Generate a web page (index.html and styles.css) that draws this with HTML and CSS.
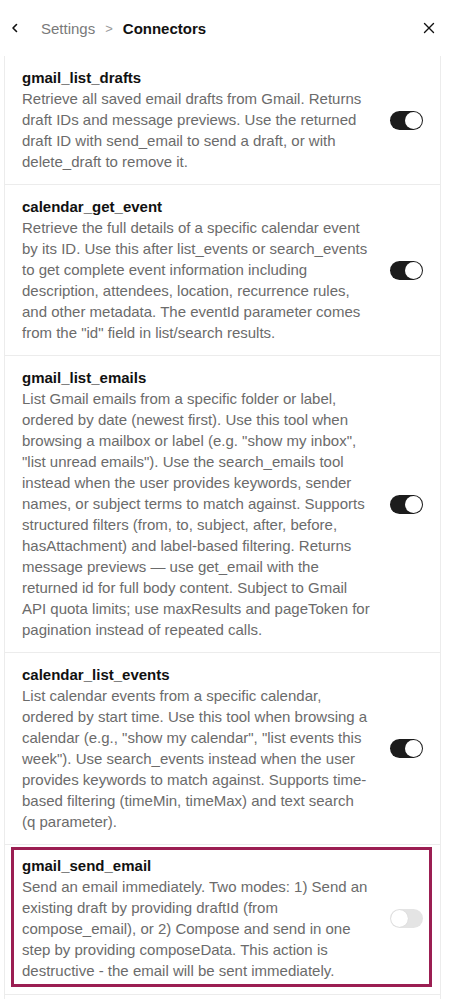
FILE: index.html
```html
<!DOCTYPE html>
<html lang="en">
<head>
  <meta charset="UTF-8" />
  <title>Connectors</title>
  <link rel="stylesheet" href="styles.css">
</head>
<body>
  <header class="topbar">
    <button class="icon-btn back" aria-label="Back">
      <svg width="12" height="12" viewBox="0 0 12 12"><path d="M7.5 2.5 L4 6 L7.5 9.5" fill="none" stroke="#111" stroke-width="1.6" stroke-linecap="round" stroke-linejoin="round"/></svg>
    </button>
    <nav class="crumbs">
      <span class="crumb">Settings</span>
      <span class="sep">&gt;</span>
      <span class="crumb current">Connectors</span>
    </nav>
    <button class="icon-btn close" aria-label="Close">
      <svg width="12" height="12" viewBox="0 0 12 12"><path d="M1.5 1.5 L10.5 10.5 M10.5 1.5 L1.5 10.5" fill="none" stroke="#111" stroke-width="1.4" stroke-linecap="round"/></svg>
    </button>
  </header>

  <div class="panel">
    <div class="row">
      <div class="info">
        <div class="name">gmail_list_drafts</div>
        <div class="desc">Retrieve all saved email drafts from Gmail. Returns draft IDs and message previews. Use the returned draft ID with send_email to send a draft, or with delete_draft to remove it.</div>
      </div>
      <span class="toggle on"></span>
    </div>

    <div class="row">
      <div class="info">
        <div class="name">calendar_get_event</div>
        <div class="desc">Retrieve the full details of a specific calendar event by its ID. Use this after list_events or search_events to get complete event information including description, attendees, location, recurrence rules, and other metadata. The eventId parameter comes from the "id" field in list/search results.</div>
      </div>
      <span class="toggle on"></span>
    </div>

    <div class="row">
      <div class="info">
        <div class="name">gmail_list_emails</div>
        <div class="desc">List Gmail emails from a specific folder or label, ordered by date (newest first). Use this tool when browsing a mailbox or label (e.g. "show my inbox", "list unread emails"). Use the search_emails tool instead when the user provides keywords, sender names, or subject terms to match against. Supports structured filters (from, to, subject, after, before, hasAttachment) and label-based filtering. Returns message previews — use get_email with the returned id for full body content. Subject to Gmail API quota limits; use maxResults and pageToken for pagination instead of repeated calls.</div>
      </div>
      <span class="toggle on"></span>
    </div>

    <div class="row">
      <div class="info">
        <div class="name">calendar_list_events</div>
        <div class="desc">List calendar events from a specific calendar, ordered by start time. Use this tool when browsing a calendar (e.g., "show my calendar", "list events this week"). Use search_events instead when the user provides keywords to match against. Supports time-based filtering (timeMin, timeMax) and text search <span class="nw">(q parameter).</span></div>
      </div>
      <span class="toggle on"></span>
    </div>

    <div class="row selected">
      <div class="focus">
        <div class="info">
          <div class="name">gmail_send_email</div>
          <div class="desc">Send an email immediately. Two modes: 1) Send an existing draft by providing draftId (from compose_email), or 2) Compose and send in one step by providing composeData. This action is destructive - the email will be sent immediately.</div>
        </div>
        <span class="toggle"></span>
      </div>
    </div>

    <div class="row tail"></div>
  </div>
</body>
</html>
```

FILE: styles.css
```css
* { box-sizing: border-box; }
body {
  margin: 0;
  background: #fff;
  font-family: "Liberation Sans", Arial, sans-serif;
  color: #111;
  overflow: hidden;
}
.topbar {
  height: 56px;
  display: flex;
  align-items: center;
  padding: 0 27px 0 8px;
}
.icon-btn {
  background: none;
  border: none;
  padding: 0;
  width: 14px;
  height: 14px;
  display: flex;
  align-items: center;
  justify-content: center;
  cursor: pointer;
}
.crumbs {
  flex: 1;
  display: flex;
  align-items: center;
  gap: 10px;
  margin-left: 19px;
  font-size: 15px;
}
.crumb { color: #7a7a7a; }
.sep { color: #999; font-size: 13px; }
.crumb.current { color: #111; font-weight: bold; }

.panel {
  margin-left: 4px;
  width: 437px;
  border-left: 1px solid #ececec;
  border-right: 1px solid #ececec;
}
.row {
  display: flex;
  align-items: center;
  gap: 10px;
  padding: 12px 17px;
  border-bottom: 1px solid #ececec;
}
.info {
  width: 352px;
  flex-shrink: 0;
}
.name {
  font-size: 15px;
  font-weight: bold;
  line-height: 20px;
  color: #111;
}
.desc {
  font-size: 15px;
  line-height: 21px;
  color: #6b6b6b;
}
.nw { white-space: nowrap; }
.toggle {
  position: relative;
  width: 33px;
  height: 19px;
  border-radius: 10px;
  background: #e4e4e4;
  margin-left: 6px;
}
.toggle::after {
  content: "";
  position: absolute;
  top: 1px;
  left: 1px;
  width: 17px;
  height: 17px;
  border-radius: 50%;
  background: #fff;
  box-shadow: 0 0 1px rgba(0,0,0,0.15);
}
.toggle.on { background: #1c1c1c; }
.toggle.on::after {
  left: 15px;
  box-shadow: none;
}
.row.selected {
  padding: 2px 8px 7px 6px;
}
.focus {
  flex: 1;
  display: flex;
  align-items: center;
  gap: 10px;
  border: 3px solid #9b1e52;
  padding: 6px 6px 3px 8px;
}
.row.tail {
  height: 8px;
  padding: 0;
  border-bottom: none;
}
```
